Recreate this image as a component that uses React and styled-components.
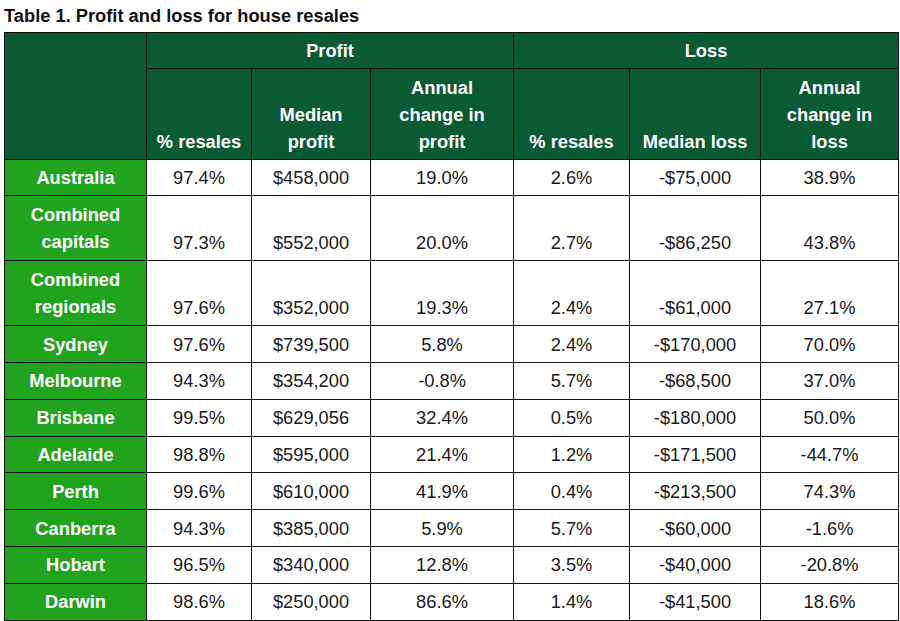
import React from "react";
import styled, { createGlobalStyle } from "styled-components";

const Global = createGlobalStyle`
  html, body { margin: 0; padding: 0; background: #fff; }
  body { font-family: "Liberation Sans", Arial, Helvetica, sans-serif; color: #111; }
`;

const Page = styled.div`
  padding: 4px 2px 0 4px;
  width: 900px;
  box-sizing: border-box;
`;

const Title = styled.div`
  font-weight: 700;
  font-size: 18.3px;
  line-height: 24px;
  height: 27.5px;
  color: #111;
`;

const Table = styled.table`
  border-collapse: collapse;
  table-layout: fixed;
  width: 894px;
  border: 1.5px solid #111;
`;

const Row = styled.tr`
  height: ${(p) => (p.$tall ? "65px" : "36.8px")};
`;

const HeadCell = styled.th`
  background: #0a5a35;
  color: #fff;
  font-weight: 700;
  font-size: 18.3px;
  line-height: 27px;
  text-align: center;
  vertical-align: ${(p) => (p.$middle ? "middle" : "bottom")};
  padding: 4.5px 4px 4px;
  border: 1.5px solid #111;
`;

const NameCell = styled.th`
  background: #22a31e;
  color: #fff;
  font-weight: 700;
  font-size: 18.3px;
  line-height: 27px;
  text-align: center;
  vertical-align: middle;
  padding: 4px 6px;
  border: 1.5px solid #111;
`;

const Cell = styled.td`
  background: #fff;
  color: #1a1a1a;
  font-size: 18.3px;
  line-height: 27px;
  text-align: center;
  vertical-align: bottom;
  padding: 4px 4px 4.5px;
  border: 1.5px solid #111;
`;

const widths = [142, 105, 119, 143, 116, 131, 138];

const rows = [
  ["Australia", "97.4%", "$458,000", "19.0%", "2.6%", "-$75,000", "38.9%"],
  ["Combined capitals", "97.3%", "$552,000", "20.0%", "2.7%", "-$86,250", "43.8%"],
  ["Combined regionals", "97.6%", "$352,000", "19.3%", "2.4%", "-$61,000", "27.1%"],
  ["Sydney", "97.6%", "$739,500", "5.8%", "2.4%", "-$170,000", "70.0%"],
  ["Melbourne", "94.3%", "$354,200", "-0.8%", "5.7%", "-$68,500", "37.0%"],
  ["Brisbane", "99.5%", "$629,056", "32.4%", "0.5%", "-$180,000", "50.0%"],
  ["Adelaide", "98.8%", "$595,000", "21.4%", "1.2%", "-$171,500", "-44.7%"],
  ["Perth", "99.6%", "$610,000", "41.9%", "0.4%", "-$213,500", "74.3%"],
  ["Canberra", "94.3%", "$385,000", "5.9%", "5.7%", "-$60,000", "-1.6%"],
  ["Hobart", "96.5%", "$340,000", "12.8%", "3.5%", "-$40,000", "-20.8%"],
  ["Darwin", "98.6%", "$250,000", "86.6%", "1.4%", "-$41,500", "18.6%"],
];

export default function App() {
  return (
    <Page>
      <Global />
      <Title>Table 1. Profit and loss for house resales</Title>
      <Table>
        <colgroup>
          {widths.map((w, i) => (
            <col key={i} style={{ width: w }} />
          ))}
        </colgroup>
        <thead>
          <tr>
            <HeadCell rowSpan={2} />
            <HeadCell colSpan={3} $middle>Profit</HeadCell>
            <HeadCell colSpan={3} $middle>Loss</HeadCell>
          </tr>
          <tr>
            <HeadCell>% resales</HeadCell>
            <HeadCell>
              Median
              <br />
              profit
            </HeadCell>
            <HeadCell>
              Annual
              <br />
              change in
              <br />
              profit
            </HeadCell>
            <HeadCell>% resales</HeadCell>
            <HeadCell>Median loss</HeadCell>
            <HeadCell>
              Annual
              <br />
              change in
              <br />
              loss
            </HeadCell>
          </tr>
        </thead>
        <tbody>
          {rows.map((r) => (
            <Row key={r[0]} $tall={r[0].startsWith("Combined")}>
              <NameCell>{r[0]}</NameCell>
              {r.slice(1).map((v, i) => (
                <Cell key={i}>{v}</Cell>
              ))}
            </Row>
          ))}
        </tbody>
      </Table>
    </Page>
  );
}
